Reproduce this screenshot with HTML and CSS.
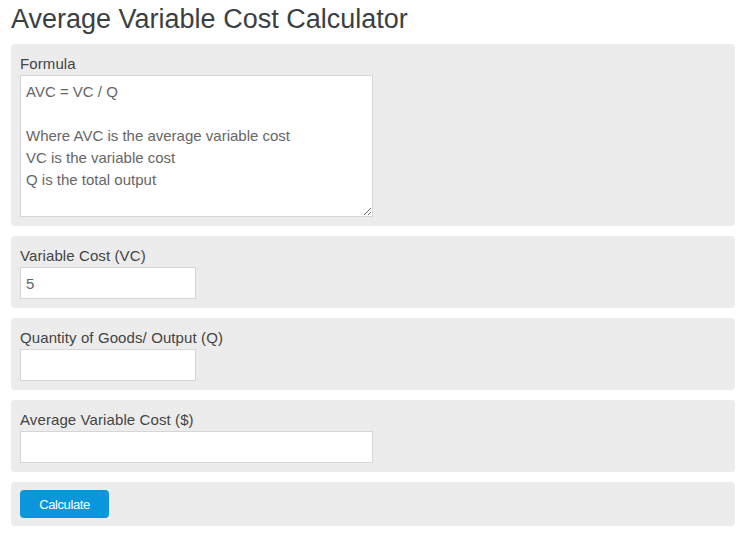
FILE: index.html
```html
<!DOCTYPE html>
<html lang="en">
<head>
<meta charset="UTF-8">
<title>Average Variable Cost Calculator</title>
<link rel="stylesheet" href="styles.css">
</head>
<body>
<h1>Average Variable Cost Calculator</h1>
<form id="calcForm">
<div class="field">
<label for="formula">Formula</label>
<textarea id="formula" class="wide" rows="6">AVC = VC / Q

Where AVC is the average variable cost
VC is the variable cost
Q is the total output</textarea>
</div>
<div class="field">
<label for="vc">Variable Cost (VC)</label>
<input type="text" id="vc" value="5">
</div>
<div class="field">
<label for="q">Quantity of Goods/ Output (Q)</label>
<input type="text" id="q">
</div>
<div class="field">
<label for="avc">Average Variable Cost ($)</label>
<input type="text" id="avc" class="wide">
</div>
<div class="field actions">
<button type="submit">Calculate</button>
</div>
</form>
<script>
document.getElementById("calcForm").addEventListener("submit", e => {
  e.preventDefault();
  const vc = Number(document.getElementById("vc").value);
  const q = Number(document.getElementById("q").value);
  document.getElementById("avc").value = q ? (vc / q).toFixed(2) : "";
});
</script>
</body>
</html>
```
FILE: styles.css
```css
body {
  font-family: Arial, "Liberation Sans", sans-serif;
  margin: 0;
  padding: 0 9px 0 11px;
  background: #fff;
  color: #333;
}
h1 {
  font-size: 27px;
  font-weight: normal;
  color: #3a3f44;
  margin: 0;
  padding: 4px 0 0;
  height: 40px;
  line-height: 30px;
}
form {
  display: flex;
  flex-direction: column;
  gap: 10px;
}
.field {
  background: #ececec;
  border-radius: 4px;
  padding: 9px;
  display: flex;
  flex-direction: column;
  align-items: flex-start;
}
.actions {
  padding: 8px 9px;
}
label {
  font-size: 15px;
  letter-spacing: 0.1px;
  line-height: 22px;
  color: #444;
}
input, textarea {
  font-family: Arial, "Liberation Sans", sans-serif;
  font-size: 15px;
  color: #666;
  background: #fff;
  border: 1px solid #d6d6d6;
  border-radius: 0;
  box-sizing: border-box;
  width: 176px;
  height: 32px;
  padding: 0 5px;
  margin: 0;
  outline: none;
}
.wide {
  width: 353px;
}
textarea {
  height: 142px;
  line-height: 22px;
  padding: 5px 5px 3px;
  resize: vertical;
}
button {
  font-family: Arial, "Liberation Sans", sans-serif;
  font-size: 13px;
  letter-spacing: -0.4px;
  color: #fff;
  background: #0b96dc;
  border: none;
  border-radius: 4px;
  width: 89px;
  height: 28px;
  margin: 0;
  cursor: pointer;
}
button:hover {
  background: #0a84c2;
}
```
